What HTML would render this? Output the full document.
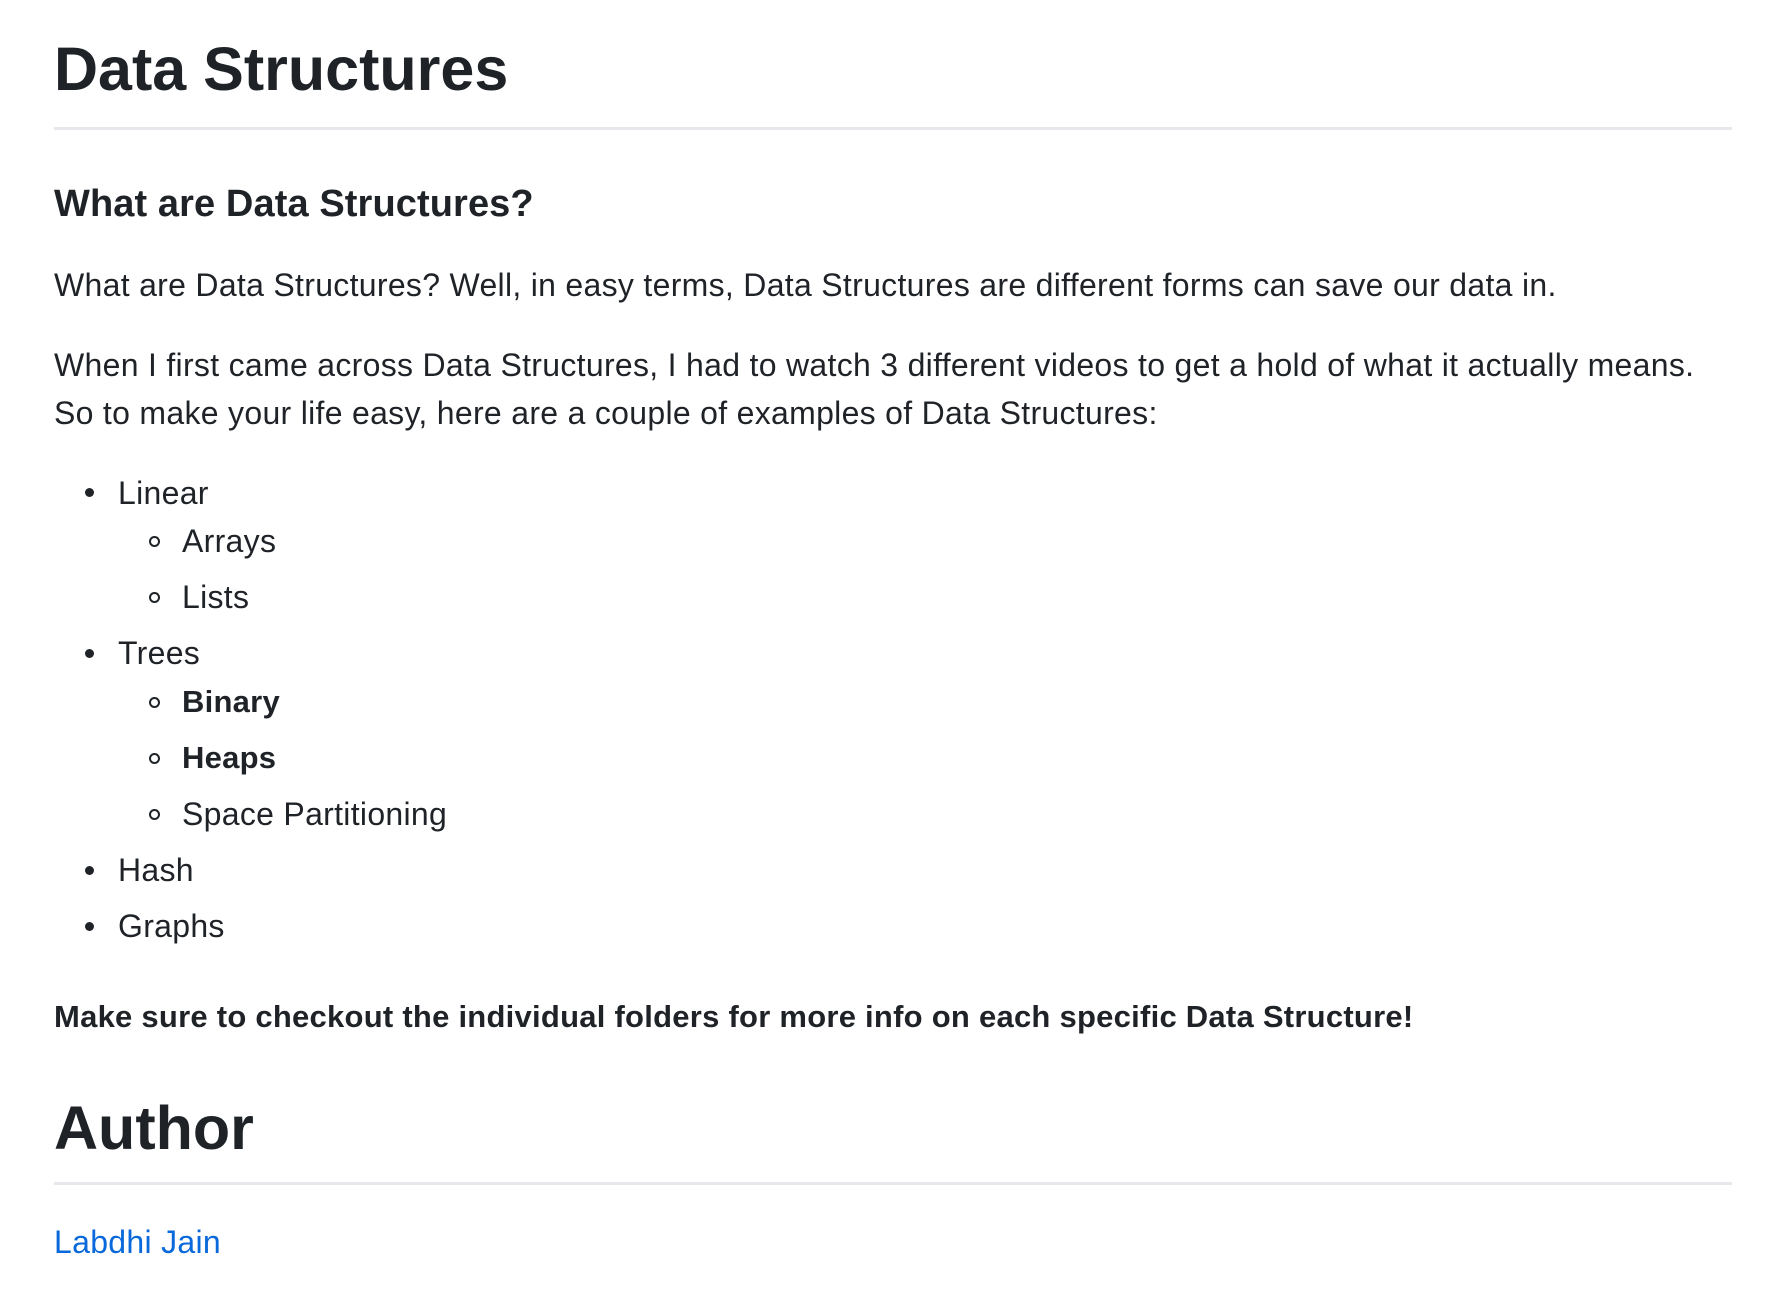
<!DOCTYPE html>
<html><head><meta charset="utf-8"><style>
html,body{margin:0;padding:0;background:#fff;}
body{width:1788px;height:1306px;position:relative;overflow:hidden;font-family:"Liberation Sans",Arial,sans-serif;color:#1f2328;}
.t{position:absolute;white-space:nowrap;font-size:32px;letter-spacing:0.3px;line-height:48px;height:48px;}
.h1{font-size:61px;letter-spacing:0;font-weight:bold;line-height:80px;height:80px;}
.h3{font-size:38px;letter-spacing:0.1px;font-weight:bold;}
.b{font-weight:bold;font-size:31px;letter-spacing:0.25px;}
.hr{position:absolute;left:54px;width:1678px;height:3px;background:#e6e8eb;}
.d{position:absolute;width:9px;height:9px;border-radius:50%;background:#1f2328;}
.c{position:absolute;width:7px;height:7px;border-radius:50%;border:2px solid #1f2328;box-sizing:content-box;}
a{color:#0969da;text-decoration:none;}
</style></head><body>
<div class="t h1" style="left:54px;top:29px;">Data Structures</div>
<div class="hr" style="top:127px;"></div>
<div class="t h3" style="left:54px;top:180px;">What are Data Structures?</div>
<div class="t" style="left:54px;top:261px;">What are Data Structures? Well, in easy terms, Data Structures are different forms can save our data in.</div>
<div class="t" style="left:54px;top:341px;">When I first came across Data Structures, I had to watch 3 different videos to get a hold of what it actually means.</div>
<div class="t" style="left:54px;top:389px;">So to make your life easy, here are a couple of examples of Data Structures:</div>

<div class="d" style="left:85px;top:488px;"></div><div class="t" style="left:118px;top:469px;">Linear</div>
<div class="c" style="left:149px;top:536px;"></div><div class="t" style="left:182px;top:517px;">Arrays</div>
<div class="c" style="left:149px;top:592px;"></div><div class="t" style="left:182px;top:573px;">Lists</div>
<div class="d" style="left:85px;top:649px;"></div><div class="t" style="left:118px;top:629px;">Trees</div>
<div class="c" style="left:149px;top:697px;"></div><div class="t b" style="left:182px;top:678px;">Binary</div>
<div class="c" style="left:149px;top:753px;"></div><div class="t b" style="left:182px;top:734px;">Heaps</div>
<div class="c" style="left:149px;top:809px;"></div><div class="t" style="left:182px;top:790px;">Space Partitioning</div>
<div class="d" style="left:85px;top:866px;"></div><div class="t" style="left:118px;top:846px;">Hash</div>
<div class="d" style="left:85px;top:922px;"></div><div class="t" style="left:118px;top:902px;">Graphs</div>

<div class="t b" style="left:54px;top:993px;">Make sure to checkout the individual folders for more info on each specific Data Structure!</div>
<div class="t h1" style="left:54px;top:1088px;">Author</div>
<div class="hr" style="top:1182px;"></div>
<div class="t" style="left:54px;top:1218px;"><a>Labdhi Jain</a></div>
</body></html>
